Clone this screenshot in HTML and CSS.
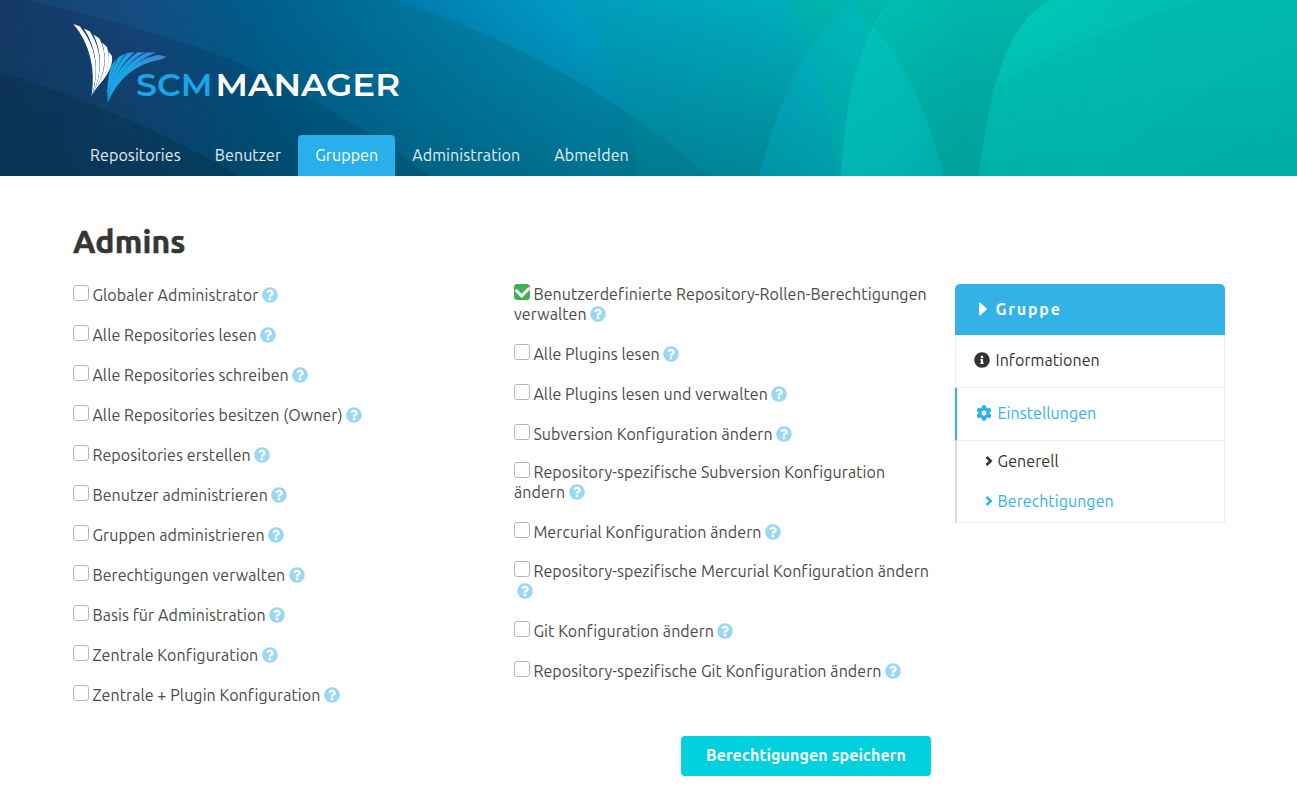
FILE: index.html
```html
<!DOCTYPE html>
<html lang="de">
<head>
<meta charset="utf-8">
<title>SCM-Manager</title>
<link rel="stylesheet" href="styles.css">
</head>
<body>
<svg width="0" height="0" class="sprite" aria-hidden="true">
  <symbol id="help" viewBox="0 0 512 512"><path d="M504 256c0 136.997-111.043 248-248 248S8 392.997 8 256C8 119.083 119.043 8 256 8s248 111.083 248 248zM262.655 90c-54.497 0-89.255 22.957-116.549 63.758-3.536 5.286-2.353 12.415 2.715 16.258l34.699 26.31c5.205 3.947 12.621 3.008 16.665-2.122 17.864-22.658 30.113-35.797 57.303-35.797 20.429 0 45.698 13.148 45.698 32.958 0 14.976-12.363 22.667-32.534 33.976C247.128 238.528 216 254.941 216 296v4c0 6.627 5.373 12 12 12h56c6.627 0 12-5.373 12-12v-1.333c0-28.462 83.186-29.647 83.186-106.667 0-58.002-60.165-102-116.531-102zM256 338c-25.365 0-46 20.635-46 46 0 25.364 20.635 46 46 46s46-20.636 46-46c0-25.365-20.635-46-46-46z"/></symbol>
</svg>
<header class="hero">
  <svg class="hero-art" viewBox="0 0 1297 176" preserveAspectRatio="none" aria-hidden="true">
    <defs>
      <linearGradient id="base" gradientUnits="userSpaceOnUse" x1="0" y1="0" x2="1297" y2="0">
        <stop offset="0" stop-color="#1b3c72"/><stop offset=".1" stop-color="#1c4788"/><stop offset=".15" stop-color="#0f5290"/><stop offset=".2" stop-color="#005f98"/><stop offset=".33" stop-color="#0080b2"/><stop offset=".45" stop-color="#009fc8"/><stop offset=".6" stop-color="#00b4c8"/><stop offset=".68" stop-color="#00cac4"/><stop offset=".85" stop-color="#00d0bc"/><stop offset="1" stop-color="#00c6b9"/>
      </linearGradient>
      <linearGradient id="shade" x1="0" y1="0" x2="0" y2="1">
        <stop offset="0" stop-color="#004058" stop-opacity="0"/><stop offset="1" stop-color="#004058" stop-opacity=".42"/>
      </linearGradient>
      <linearGradient id="lift" x1="0" y1="0" x2="1" y2="0">
        <stop offset=".6" stop-color="#00bab2" stop-opacity="0"/><stop offset=".9" stop-color="#00bab2" stop-opacity=".85"/>
      </linearGradient>
      <linearGradient id="glow" x1="0" y1="0" x2="1" y2="0">
        <stop offset="0" stop-color="#00d8c4" stop-opacity=".3"/><stop offset=".6" stop-color="#00d8c4" stop-opacity="0"/>
      </linearGradient>
    </defs>
    <rect width="1297" height="176" fill="url(#base)"/>
    <rect width="1297" height="176" fill="url(#shade)"/>
    <rect width="1297" height="176" fill="url(#lift)"/>
    <path fill="#002f38" fill-opacity=".22" d="M25 0Q140 25 232 60Q340 108 430 176H0V0Z"/>
    <path fill="#00202c" fill-opacity=".22" d="M0 72Q130 112 240 176H0Z"/>
    <path fill="#005c68" fill-opacity=".22" d="M397 0Q580 62 709 176H430Q340 108 232 60Q140 25 25 0Z"/>
    <path fill="#009690" fill-opacity=".2" d="M571 0Q625 60 639 176H836Q828 60 784 0Z"/>
    <path fill="#00a890" fill-opacity=".42" d="M784 0Q828 60 836 176H841Q848 45 892 0Z"/>
    <path fill="#00bfd8" fill-opacity=".26" d="M851 0Q789 56 759 176H944Q918 74 851 0Z"/>
    <path fill="#00988a" fill-opacity=".34" d="M892 0Q848 45 841 176H979Q995 25 1051 0Z"/>
    <path fill="url(#glow)" d="M892 0Q848 45 841 176H979Q995 25 1051 0Z"/>
    <path fill="#00d0d0" fill-opacity=".26" d="M892 0Q848 45 841 176H944Q918 74 874 27Z"/>
    <path fill="url(#glow)" d="M1051 0Q995 25 979 176H1297V0Z"/>
    <path fill="#00a8a0" fill-opacity=".2" d="M1207 0Q1000 50 896 176H1297V0Z"/>
    <path fill="#00a8a4" fill-opacity=".14" d="M1297 48Q1170 95 1099 176H1297Z"/>
    <path fill="#00a8a4" fill-opacity=".12" d="M1297 120Q1225 145 1178 176H1297Z"/>
  </svg>
  <div class="container hero-body">
    <svg class="logo" viewBox="0 0 330 84" role="img" aria-label="SCM-Manager">
      <defs><linearGradient id="wing" gradientUnits="userSpaceOnUse" x1="45" y1="65" x2="85" y2="28"><stop offset=".4" stop-color="#1ba4e6"/><stop offset="1" stop-color="#3a86d8"/></linearGradient></defs>
      <g fill="#fff">
        <path d="M.5 0L7 2.500Q31 32 18.500 73Q25 30 .5 0Z"/>
        <path d="M11 4.500L17 7.500Q35 36 19.500 71Q29.500 34 11 4.500Z"/>
        <path d="M20.500 10.500L26.500 14.500Q39 39 20.500 69Q33.500 38 20.500 10.500Z"/>
        <path d="M29 18.500L34 23Q41 44 22 66Q37 43 29 18.500Z"/>
        <path d="M35.500 27.500L39 32Q40.500 46 24 63Q38 46 35.500 27.500Z"/>
      </g>
      <g fill="url(#wing)">
        <path d="M38 42L44 34Q38 48 34 74Q34 56 38 42Z"/>
        <path d="M45.500 33L52.500 29.500Q40 46 34 77Q36 50 45.500 33Z"/>
        <path d="M54 29L62 28Q43 43 34.200 78Q38 48 54 29Z"/>
        <path d="M64 28.500L72 28Q46 42 34.400 79Q40 46 64 28.500Z"/>
        <path d="M73.500 28.500L83 28.500Q49 42 34.500 79Q43 44 73.500 28.500Z"/>
        <path d="M84 31Q89 31 93.500 33L88 35.500Q50 42 34.500 79Q46 40 84 31Z"/>
      </g>
      <text class="brand scm" x="63" y="72" textLength="76.500" lengthAdjust="spacingAndGlyphs">SCM</text>
      <text class="brand" x="142.500" y="72" textLength="184.500" lengthAdjust="spacingAndGlyphs">MANAGER</text>
    </svg>
    <nav class="tabs">
      <a>Repositories</a><a>Benutzer</a><a class="active">Gruppen</a><a>Administration</a><a>Abmelden</a>
    </nav>
  </div>
</header>
<main class="container page">
  <h1>Admins</h1>
  <div class="columns">
    <form class="permissions">
      <div class="col">
        <label class="row"><i class="box"></i><span>Globaler Administrator</span> <svg class="help"><use href="#help"/></svg></label>
        <label class="row"><i class="box"></i><span>Alle Repositories lesen</span> <svg class="help"><use href="#help"/></svg></label>
        <label class="row"><i class="box"></i><span>Alle Repositories schreiben</span> <svg class="help"><use href="#help"/></svg></label>
        <label class="row"><i class="box"></i><span>Alle Repositories besitzen (Owner)</span> <svg class="help"><use href="#help"/></svg></label>
        <label class="row"><i class="box"></i><span>Repositories erstellen</span> <svg class="help"><use href="#help"/></svg></label>
        <label class="row"><i class="box"></i><span>Benutzer administrieren</span> <svg class="help"><use href="#help"/></svg></label>
        <label class="row"><i class="box"></i><span>Gruppen administrieren</span> <svg class="help"><use href="#help"/></svg></label>
        <label class="row"><i class="box"></i><span>Berechtigungen verwalten</span> <svg class="help"><use href="#help"/></svg></label>
        <label class="row"><i class="box"></i><span>Basis für Administration</span> <svg class="help"><use href="#help"/></svg></label>
        <label class="row"><i class="box"></i><span>Zentrale Konfiguration</span> <svg class="help"><use href="#help"/></svg></label>
        <label class="row"><i class="box"></i><span>Zentrale + Plugin Konfiguration</span> <svg class="help"><use href="#help"/></svg></label>
      </div>
      <div class="col second">
        <label class="row"><i class="box checked"></i><span>Benutzerdefinierte Repository-Rollen-Berechtigungen<br>verwalten</span> <svg class="help"><use href="#help"/></svg></label>
        <label class="row"><i class="box"></i><span>Alle Plugins lesen</span> <svg class="help"><use href="#help"/></svg></label>
        <label class="row"><i class="box"></i><span>Alle Plugins lesen und verwalten</span> <svg class="help"><use href="#help"/></svg></label>
        <label class="row"><i class="box"></i><span>Subversion Konfiguration ändern</span> <svg class="help"><use href="#help"/></svg></label>
        <label class="row tight"><i class="box"></i><span>Repository-spezifische Subversion Konfiguration<br>ändern</span> <svg class="help"><use href="#help"/></svg></label>
        <label class="row"><i class="box"></i><span>Mercurial Konfiguration ändern</span> <svg class="help"><use href="#help"/></svg></label>
        <label class="row snug"><i class="box"></i><span>Repository-spezifische Mercurial Konfiguration ändern</span><br><svg class="help wrapped"><use href="#help"/></svg></label>
        <label class="row"><i class="box"></i><span>Git Konfiguration ändern</span> <svg class="help"><use href="#help"/></svg></label>
        <label class="row"><i class="box"></i><span>Repository-spezifische Git Konfiguration ändern</span> <svg class="help"><use href="#help"/></svg></label>
      </div>
      <div class="actions"><button type="button">Berechtigungen speichern</button></div>
    </form>
    <aside class="menu">
      <div class="menu-title"><svg width="8" height="14" viewBox="0 0 8 14"><path fill="currentColor" d="M0 1.2Q0 0 1 .6L7.500 6.300Q8 7 7.500 7.700L1 13.400Q0 14 0 12.800Z"/></svg><span>Gruppe</span></div>
      <a class="item"><svg width="16" height="16" viewBox="0 0 512 512"><path fill="currentColor" d="M256 8C119.043 8 8 119.083 8 256c0 136.997 111.043 248 248 248s248-111.003 248-248C504 119.083 392.957 8 256 8zm0 110c23.196 0 42 18.804 42 42s-18.804 42-42 42-42-18.804-42-42 18.804-42 42-42zm56 254c0 6.627-5.373 12-12 12h-88c-6.627 0-12-5.373-12-12v-24c0-6.627 5.373-12 12-12h12v-64h-12c-6.627 0-12-5.373-12-12v-24c0-6.627 5.373-12 12-12h64c6.627 0 12 5.373 12 12v100h12c6.627 0 12 5.373 12 12v24z"/></svg><span>Informationen</span></a>
      <a class="item current"><svg width="16" height="16" viewBox="0 0 512 512"><path fill="currentColor" d="M487.4 315.7l-42.6-24.6c4.3-23.2 4.3-47 0-70.2l42.6-24.6c4.9-2.8 7.1-8.6 5.5-14-11.1-35.6-30-67.8-54.7-94.6-3.8-4.1-10-5.1-14.8-2.3L380.8 110c-17.9-15.4-38.5-27.3-60.8-35.1V25.8c0-5.6-3.9-10.5-9.4-11.7-36.7-8.2-74.3-7.8-109.2 0-5.5 1.2-9.4 6.1-9.4 11.7V75c-22.2 7.9-42.8 19.8-60.8 35.1L88.700 85.500c-4.900-2.800-11-1.900-14.800 2.300-24.700 26.700-43.600 58.900-54.700 94.600-1.700 5.400.6 11.200 5.500 14L67.300 221c-4.300 23.200-4.300 47 0 70.200l-42.600 24.600c-4.900 2.800-7.100 8.600-5.500 14 11.100 35.600 30 67.800 54.700 94.600 3.800 4.100 10 5.100 14.800 2.300l42.600-24.600c17.900 15.400 38.500 27.300 60.800 35.100v49.200c0 5.600 3.900 10.500 9.400 11.700 36.700 8.200 74.300 7.800 109.200 0 5.500-1.200 9.400-6.100 9.400-11.700v-49.200c22.200-7.900 42.800-19.800 60.800-35.100l42.600 24.600c4.900 2.800 11 1.900 14.800-2.300 24.700-26.700 43.600-58.900 54.700-94.600 1.500-5.500-.7-11.300-5.600-14.100zM256 336c-44.100 0-80-35.900-80-80s35.900-80 80-80 80 35.900 80 80-35.900 80-80 80z"/></svg><span>Einstellungen</span></a>
      <div class="sub">
        <a><svg width="8" height="10" viewBox="0 0 8 10"><path d="M1.500 1L5.700 5L1.500 9" fill="none" stroke="currentColor" stroke-width="2.500"/></svg><span>Generell</span></a>
        <a class="on"><svg width="8" height="10" viewBox="0 0 8 10"><path d="M1.500 1L5.700 5L1.500 9" fill="none" stroke="currentColor" stroke-width="2.500"/></svg><span>Berechtigungen</span></a>
      </div>
    </aside>
  </div>
</main>
</body>
</html>
```
FILE: styles.css
```css
* { box-sizing: border-box; }
body { margin: 0; background: #fff; color: #4a4a4a; font: 16px/20px Ubuntu, "Noto Sans", sans-serif; }
.sprite { display: block; }
.container { width: 1152px; margin: 0 auto 0 73px; }
.hero { display: grid; height: 176px; }
.hero-art, .hero-body { grid-area: 1 / 1; }
.hero-art { width: 100%; height: 176px; }
.hero-body { display: flex; flex-direction: column; justify-content: space-between; padding-top: 24px; }
.logo { width: 330px; height: 84px; }
.brand { font: 600 32px Montserrat, Inter, sans-serif; fill: #fff; }
.scm { fill: #1ba4e6; }
.tabs { display: flex; }
.tabs a { height: 41px; padding: 0 17px; line-height: 41px; color: #e3eef2; border-radius: 4px 4px 0 0; letter-spacing: .09px; }
.tabs .active { background: #29b0ea; color: #fff; }
.page { padding-top: 45px; }
h1 { margin: 0 0 23px; font-size: 32px; line-height: 40px; font-weight: 700; color: #363636; letter-spacing: .15px; -webkit-text-stroke: .6px #363636; }
.columns { display: grid; grid-template-columns: 858px 270px; gap: 24px; align-items: start; }
.permissions { display: grid; grid-template-columns: 417px 417px; column-gap: 24px; }
.col { padding-top: 1px; letter-spacing: .08px; white-space: nowrap; }
.second { padding-top: 0; }
.row { display: block; margin-bottom: 20px; }
.tight { margin-top: -22px; padding-top: 20px; }
.snug { margin-top: -21px; padding-top: 20px; }
.box { display: inline-block; width: 16px; height: 16px; margin-right: 3.4px; border: 1px solid #b0b8c2; border-radius: 3px; vertical-align: top; background: #fff; }
.checked { display: inline-grid; place-items: center; border-color: #3fb24f; background: #3fb24f; }
.checked::after { content: ""; width: 10px; height: 6.5px; margin-top: -4px; border: solid #fff; border-width: 0 0 3px 3px; transform: rotate(-45deg); }
.help { width: 16px; height: 16px; margin: 2px 0 0 -.4px; fill: #98d8f4; vertical-align: top; }
.wrapped { margin-left: 3px; }
.actions { grid-column: 1 / -1; display: flex; justify-content: flex-end; margin-top: 11px; }
button { width: 250px; height: 40px; padding: 0 0 2px; border: 0; border-radius: 4px; background: #00d1df; color: #fff; font: 700 16px Ubuntu, "Noto Sans", sans-serif; letter-spacing: .12px; }
.menu-title { display: flex; align-items: center; gap: 9px; height: 51px; padding: 0 0 1px 23.5px; background: #33b2e8; border-radius: 5px 5px 0 0; color: #fff; font-weight: 700; letter-spacing: 1.8px; }
.item { display: flex; align-items: center; gap: 6px; height: 53px; padding: 0 0 2px 17.5px; border: 1px solid #eee; border-top: 0; color: #333; letter-spacing: .07px; }
.current { border-left: 2px solid #33b2e8; padding-left: 18.5px; color: #33b2e8; }
.sub { border: solid #eee; border-width: 0 1px 1px 0; border-left: 2px solid #ddd; height: 82px; }
.sub a { display: flex; align-items: center; gap: 5px; height: 40px; padding-left: 27.5px; color: #333; letter-spacing: .07px; }
.sub .on { color: #33b2e8; }
```
